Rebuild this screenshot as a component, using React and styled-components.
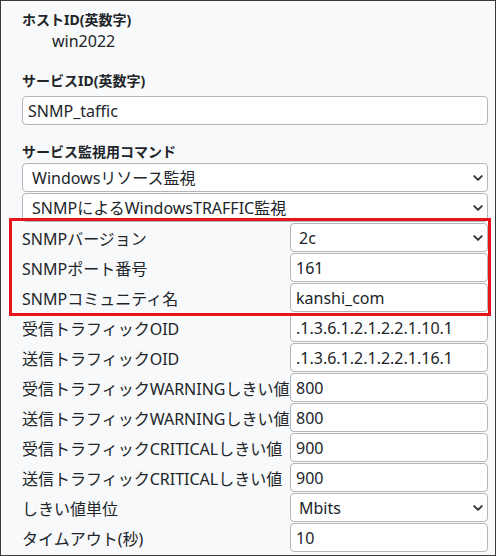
import React from 'react';
import styled, { createGlobalStyle } from 'styled-components';

const GlobalStyle = createGlobalStyle`
  html, body { margin: 0; padding: 0; }
  body {
    font-family: "Noto Sans", "Noto Sans CJK JP", sans-serif;
    color: #212529;
  }
`;

const Frame = styled.div`
  width: 496px;
  height: 556px;
  box-sizing: border-box;
  border: 1px solid #3a3a3a;
  background: #f8f9fa;
  padding: 8px 7px 0 21px;
  overflow: hidden;
`;

const Heading = styled.div`
  font-size: 14px;
  font-weight: 700;
  line-height: 21px;
  margin-top: ${(p) => p.$top || 0}px;
`;

const Plain = styled.div`
  font-size: 16px;
  line-height: 22px;
  margin-left: 30px;
`;

const TextBox = styled.input`
  display: block;
  box-sizing: border-box;
  width: 100%;
  height: 29px;
  margin: ${(p) => p.$top || 0}px 0 1px;
  padding: 0 5px;
  border: 1px solid #b3b7bb;
  border-radius: 4px;
  background: #fff;
  font: 16px "Noto Sans", "Noto Sans CJK JP", sans-serif;
  color: #212529;
  outline: none;
`;

const SelectWrap = styled.div`
  position: relative;
  width: 100%;
  margin: ${(p) => p.$top || 0}px 0 1px;
`;

const SelectBox = styled.select`
  display: block;
  box-sizing: border-box;
  width: 100%;
  height: 29px;
  padding: 0 28px 0 ${(p) => p.$pad || 9}px;
  border: 1px solid #b3b7bb;
  border-radius: 4px;
  background: #fff;
  appearance: none;
  font: 16px "Noto Sans", "Noto Sans CJK JP", sans-serif;
  color: #212529;
  outline: none;
`;

const Chevron = styled.svg`
  position: absolute;
  right: 4px;
  top: 9px;
  width: 12px;
  height: 12px;
  pointer-events: none;
`;

const Rows = styled.div`
  display: grid;
  grid-template-columns: 268px 198px;
`;

const Group = styled.div`
  position: relative;
  display: grid;
  grid-template-columns: 268px 198px;
`;

const Highlight = styled.div`
  position: absolute;
  top: -5px;
  left: -13px;
  right: -3px;
  bottom: -3px;
  border: 3px solid #e8141c;
  pointer-events: none;
`;

const Label = styled.div`
  height: 29px;
  display: flex;
  align-items: center;
  font-size: 16px;
  white-space: nowrap;
  overflow: visible;
`;

const Select = ({ value, pad, top }) => (
  <SelectWrap $top={top}>
    <SelectBox $pad={pad} defaultValue={value}>
      <option>{value}</option>
    </SelectBox>
    <Chevron viewBox="0 0 16 16">
      <path d="M3 5.5l5 5 5-5" fill="none" stroke="#343a40" strokeWidth="2.6" strokeLinecap="round" strokeLinejoin="round" />
    </Chevron>
  </SelectWrap>
);

const Field = ({ label, value, select }) => (
  <>
    <Label>{label}</Label>
    {select ? <Select value={value} pad={8} /> : <TextBox readOnly defaultValue={value} />}
  </>
);

const snmp = [
  { label: 'SNMPバージョン', value: '2c', select: true },
  { label: 'SNMPポート番号', value: '161' },
  { label: 'SNMPコミュニティ名', value: 'kanshi_com' },
];

const rest = [
  { label: '受信トラフィックOID', value: '.1.3.6.1.2.1.2.2.1.10.1' },
  { label: '送信トラフィックOID', value: '.1.3.6.1.2.1.2.2.1.16.1' },
  { label: '受信トラフィックWARNINGしきい値', value: '800' },
  { label: '送信トラフィックWARNINGしきい値', value: '800' },
  { label: '受信トラフィックCRITICALしきい値', value: '900' },
  { label: '送信トラフィックCRITICALしきい値', value: '900' },
  { label: 'しきい値単位', value: 'Mbits', select: true },
  { label: 'タイムアウト(秒)', value: '10' },
];

export default function App() {
  return (
    <>
      <GlobalStyle />
      <Frame>
        <Heading>ホストID(英数字)</Heading>
        <Plain>win2022</Plain>
        <Heading $top={18}>サービスID(英数字)</Heading>
        <TextBox readOnly defaultValue="SNMP_taffic" $top={5} />
        <Heading $top={16}>サービス監視用コマンド</Heading>
        <Select value="Windowsリソース監視" top={1} />
        <Select value="SNMPによるWindowsTRAFFIC監視" />
        <Group>
          {snmp.map((f) => (
            <Field key={f.label} {...f} />
          ))}
          <Highlight />
        </Group>
        <Rows>
          {rest.map((f) => (
            <Field key={f.label} {...f} />
          ))}
        </Rows>
      </Frame>
    </>
  );
}
